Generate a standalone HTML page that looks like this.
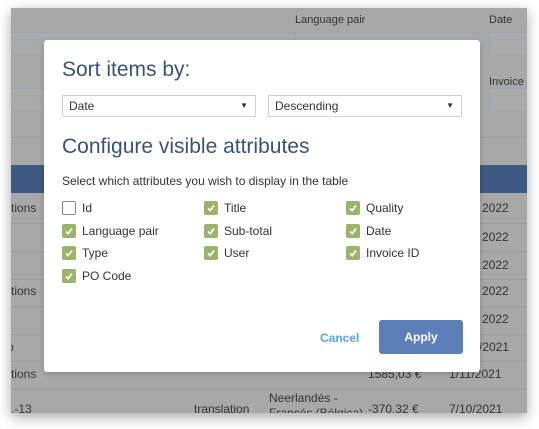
<!DOCTYPE html>
<html><head><style>
*{margin:0;padding:0;box-sizing:border-box}
body{width:539px;height:429px;background:#fff;position:relative;overflow:hidden;font-family:"Liberation Sans",sans-serif}
#win{position:absolute;left:11px;top:8px;width:516px;height:405px;background:#a8a8a8;overflow:hidden;box-shadow:0 4px 12px rgba(0,0,0,.35)}
.t{position:absolute;color:#333;font-size:12px;white-space:nowrap}
.in{position:absolute;border:1px solid #9aa3b0;background:#aaa}
.ln{position:absolute;left:0;width:516px;height:1px;background:#9a9a9a}
#modal{position:absolute;left:44px;top:40px;width:436px;height:332px;background:#fff;border-radius:3px;box-shadow:0 2px 6px rgba(0,0,0,.2)}
.h{position:absolute;left:18px;color:#3d5273;font-size:21px;white-space:nowrap}
.sel{position:absolute;top:55px;height:22px;border:1px solid #cdd3dd;font-size:12px;color:#333;padding:3px 6px}
.sel:after{content:"▼";position:absolute;right:7px;top:5px;font-size:8px}
.cb{position:absolute;width:14px;height:14px;border-radius:2px;background:#9bb36a}
.cb svg{position:absolute;left:2px;top:2px}
.cb.off{background:#fff;border:1.5px solid #7d8796}
.lb{position:absolute;font-size:12px;color:#333;white-space:nowrap}
</style></head><body>
<div id="win">
<div class="t" style="left:-6px;top:35px;color:#444">e or an ID</div>
<div class="in" style="left:-2px;top:24px;width:285px;height:23px"></div>
<div class="t" style="left:284px;top:6px;font-size:11px">Language pair</div>
<div class="in" style="left:284px;top:24px;width:181px;height:23px"></div>
<div class="t" style="left:478px;top:6px;font-size:11px">Date</div>
<div class="in" style="left:478px;top:24px;width:50px;height:23px"></div>
<div class="t" style="left:478px;top:68px;font-size:11px">Invoice</div>
<div class="in" style="left:478px;top:80px;width:50px;height:23px"></div>
<div class="in" style="left:-2px;top:80px;width:200px;height:23px"></div>
<div class="ln" style="top:129px"></div>
<div style="position:absolute;left:0;top:157px;width:516px;height:28px;background:#3f5a82"></div>
<div class="t" style="left:0;top:193px">tions</div><div class="t" style="left:471px;top:193px">2022</div>
<div class="ln" style="top:215px"></div><div class="t" style="left:471px;top:222px">2022</div>
<div class="ln" style="top:243px"></div><div class="t" style="left:471px;top:250px">2022</div>
<div class="ln" style="top:271px"></div><div class="t" style="left:0;top:276px">tions</div><div class="t" style="left:471px;top:276px">2022</div>
<div class="ln" style="top:298px"></div><div class="t" style="left:471px;top:304px">2022</div>
<div class="ln" style="top:326px"></div><div class="t" style="left:-4px;top:332px">o</div><div class="t" style="left:468px;top:332px">/2021</div>
<div class="ln" style="top:353px"></div><div class="t" style="left:0;top:359px">tions</div><div class="t" style="left:357px;top:359px">1585,03 €</div><div class="t" style="left:438px;top:359px">1/11/2021</div>
<div class="ln" style="top:381px"></div><div class="t" style="left:0;top:394px">.-13</div><div class="t" style="left:183px;top:394px">translation</div><div class="t" style="left:258px;top:383px">Neerlandés -</div><div class="t" style="left:258px;top:398px">Francés (Bélgica)</div><div class="t" style="left:357px;top:394px">-370,32 €</div><div class="t" style="left:438px;top:394px">7/10/2021</div>
</div>
<div id="modal">
<div class="h" style="top:18px">Sort items by:</div>
<div class="sel" style="left:18px;width:194px">Date</div>
<div class="sel" style="left:224px;width:194px">Descending</div>
<div class="h" style="top:95px">Configure visible attributes</div>
<div class="lb" style="left:18px;top:134px">Select which attributes you wish to display in the table</div>
<div id="cbs"></div>
<div style="position:absolute;left:276px;top:291px;font-size:12px;font-weight:bold;color:#5ea2f0">Cancel</div>
<div style="position:absolute;left:335px;top:280px;width:84px;height:34px;background:#5b7fb6;border-radius:3px;color:#fff;font-size:12px;font-weight:bold;text-align:center;line-height:34px">Apply</div>
</div>
<script>
var items=[["Id",0,0,0],["Title",1,0,1],["Quality",2,0,1],["Language pair",0,1,1],["Sub-total",1,1,1],["Date",2,1,1],["Type",0,2,1],["User",1,2,1],["Invoice ID",2,2,1],["PO Code",0,3,1]];
var h="";items.forEach(function(i){var x=18+i[1]*142,y=161+i[2]*22.5;
h+='<div class="cb'+(i[3]?'':' off')+'" style="left:'+x+'px;top:'+y+'px">'+(i[3]?'<svg width="10" height="10"><path d="M2 5.5L4.2 7.5L8 2.5" stroke="#fff" stroke-width="1.8" fill="none"/></svg>':'')+'</div><div class="lb" style="left:'+(x+20)+'px;top:'+(y)+'px">'+i[0]+'</div>';});
document.getElementById("cbs").innerHTML=h;
</script>
</body></html>
